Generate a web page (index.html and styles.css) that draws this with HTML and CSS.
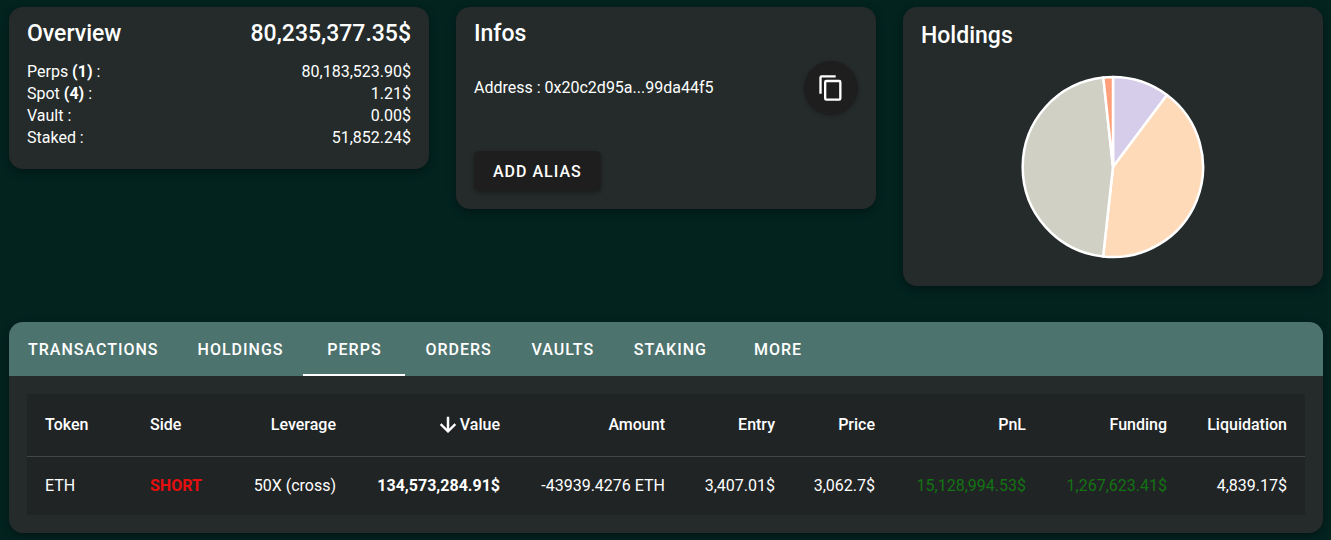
FILE: index.html
```
<!DOCTYPE html>
<html lang="en">
<head>
<meta charset="utf-8">
<meta name="viewport" content="width=device-width, initial-scale=1">
<title>Account overview</title>
<link rel="stylesheet" href="styles.css">
</head>
<body>
<main class="page">
  <div class="cards">
    <section class="card">
      <header class="card-head">
        <h2 class="card-title">Overview</h2>
        <span class="card-title">80,235,377.35$</span>
      </header>
      <dl class="balances">
        <div class="balance"><dt>Perps <b>(1)</b> :</dt><dd>80,183,523.90$</dd></div>
        <div class="balance"><dt>Spot <b>(4)</b> :</dt><dd>1.21$</dd></div>
        <div class="balance"><dt>Vault :</dt><dd>0.00$</dd></div>
        <div class="balance"><dt>Staked :</dt><dd>51,852.24$</dd></div>
      </dl>
    </section>

    <section class="card infos">
      <h2 class="card-title">Infos</h2>
      <div class="address">
        <span>Address : 0x20c2d95a...99da44f5</span>
        <button class="copy" type="button" aria-label="Copy address">
          <svg class="copy-icon" viewBox="0 0 24 24" aria-hidden="true"><path d="M19 21H8V7h11m0-2H8a2 2 0 0 0-2 2v14a2 2 0 0 0 2 2h11a2 2 0 0 0 2-2V7a2 2 0 0 0-2-2m-3-4H4a2 2 0 0 0-2 2v14h2V3h12V1z"/></svg>
        </button>
      </div>
      <button class="alias" type="button">ADD ALIAS</button>
    </section>

    <section class="card holdings">
      <h2 class="card-title">Holdings</h2>
      <svg class="pie" viewBox="-92 -92 184 184" role="img" aria-label="Holdings breakdown">
        <path class="slice slice-lilac" d="M0 0V-90A90 90 0 0 1 54 -72Z"/>
        <path class="slice slice-peach" d="M0 0L54 -72A90 90 0 0 1 -9.9 89.5Z"/>
        <path class="slice slice-stone" d="M0 0L-9.9 89.5A90 90 0 0 1 -9.7 -89.5Z"/>
        <path class="slice slice-coral" d="M0 0L-9.7 -89.5A90 90 0 0 1 0 -90Z"/>
      </svg>
    </section>
  </div>

  <section class="panel">
    <nav class="tabs" role="tablist">
      <button class="tab" type="button" role="tab">TRANSACTIONS</button>
      <button class="tab" type="button" role="tab">HOLDINGS</button>
      <button class="tab tab-active" type="button" role="tab" aria-selected="true">PERPS</button>
      <button class="tab" type="button" role="tab">ORDERS</button>
      <button class="tab" type="button" role="tab">VAULTS</button>
      <button class="tab" type="button" role="tab">STAKING</button>
      <button class="tab" type="button" role="tab">MORE</button>
    </nav>
    <div class="panel-body">
      <table class="perps">
        <colgroup>
          <col class="col-token"><col class="col-side"><col class="col-leverage"><col class="col-value"><col class="col-amount">
          <col class="col-entry"><col class="col-price"><col class="col-pnl"><col class="col-funding"><col class="col-liquidation">
        </colgroup>
        <thead>
          <tr>
            <th class="start">Token</th>
            <th class="start">Side</th>
            <th>Leverage</th>
            <th aria-sort="descending"><span class="sorted"><svg class="sort-icon" viewBox="0 0 24 24" aria-hidden="true"><path d="M11 4h2v12l5.500-5.500 1.420 1.420L12 19.840l-7.920-7.920L5.500 10.500 11 16z"/></svg>Value</span></th>
            <th>Amount</th>
            <th>Entry</th>
            <th>Price</th>
            <th>PnL</th>
            <th>Funding</th>
            <th>Liquidation</th>
          </tr>
        </thead>
        <tbody>
          <tr>
            <td class="start">ETH</td>
            <td class="start short">SHORT</td>
            <td>50X (cross)</td>
            <td class="strong">134,573,284.91$</td>
            <td>-43939.4276 ETH</td>
            <td>3,407.01$</td>
            <td>3,062.7$</td>
            <td class="gain">15,128,994.53$</td>
            <td class="gain">1,267,623.41$</td>
            <td>4,839.17$</td>
          </tr>
        </tbody>
      </table>
    </div>
  </section>
</main>
</body>
</html>
```
FILE: styles.css
```
* {
  box-sizing: border-box;
}

body {
  margin: 0;
  background: #03231f;
  color: #fff;
  font-family: Roboto, "Liberation Sans", sans-serif;
  font-size: 16px;
  line-height: 22px;
}

button {
  border: 0;
  color: inherit;
  font: inherit;
  cursor: pointer;
}

.page {
  display: flex;
  flex-direction: column;
  gap: 36px;
  padding: 7px 8px 7px 9px;
}

.cards {
  display: grid;
  grid-template-columns: repeat(3, 1fr);
  align-items: start;
  gap: 27px;
}

.card {
  padding: 9px 18px 18px;
  border-radius: 14px;
  background: #242b2a;
  box-shadow: 0 3px 8px rgba(0, 0, 0, 0.35);
}

.card-title {
  margin: 0;
  font-size: 23px;
  font-weight: 500;
  line-height: 36px;
}

.card-head {
  display: flex;
  justify-content: space-between;
}

.balances {
  margin: 9px 0 0;
  padding-bottom: 2px;
}

.balance {
  display: flex;
  justify-content: space-between;
}

.balance dd {
  margin: 0;
}

.infos {
  display: flex;
  flex-direction: column;
  align-items: flex-start;
}

.address {
  display: flex;
  align-items: center;
  justify-content: space-between;
  width: 100%;
  margin: 9px 0 36px;
}

.copy {
  display: flex;
  align-items: center;
  justify-content: center;
  width: 54px;
  height: 54px;
  padding: 0;
  border-radius: 50%;
  background: #1e1e1e;
  box-shadow: 0 1px 4px rgba(0, 0, 0, 0.25);
}

.copy-icon {
  width: 28px;
  height: 28px;
  fill: #fff;
}

.alias {
  padding: 10px 19px 8px;
  border-radius: 5px;
  background: #1e1e1e;
  box-shadow: 0 2px 4px rgba(0, 0, 0, 0.3);
  font-weight: 500;
  letter-spacing: 1px;
}

.holdings {
  display: flex;
  flex-direction: column;
  padding: 11px 18px 27px;
}

.pie {
  align-self: center;
  width: 184px;
  margin-top: 21px;
}

.slice {
  stroke: #fff;
  stroke-width: 2.500;
  stroke-linejoin: round;
}

.slice-lilac {
  fill: #d6cdea;
}

.slice-peach {
  fill: #ffdab9;
}

.slice-stone {
  fill: #d0d0c4;
}

.slice-coral {
  fill: #ffa07a;
}

.panel {
  overflow: hidden;
  border-radius: 14px;
  background: #242b2a;
  box-shadow: 0 3px 8px rgba(0, 0, 0, 0.35);
}

.tabs {
  display: flex;
  gap: 1px;
  background: #4d736e;
}

.tab {
  min-width: 102px;
  height: 54px;
  padding: 4px 19px 0;
  border-bottom: 2px solid transparent;
  background: none;
  font-weight: 500;
  letter-spacing: 1px;
}

.tab-active {
  border-bottom-color: #fff;
}

.panel-body {
  padding: 18px;
}

.perps {
  width: 100%;
  table-layout: fixed;
  border-collapse: collapse;
  background: #212425;
}

.perps th,
.perps td {
  padding: 0 18px;
  text-align: right;
  white-space: nowrap;
}

.perps th {
  height: 62px;
  border-bottom: 1px solid #424646;
  font-weight: 500;
}

.perps td {
  height: 59px;
}

.perps .start {
  text-align: left;
}

.perps .short {
  color: #e60e0e;
  font-weight: 700;
}

.perps .strong {
  font-weight: 700;
}

.perps .gain {
  color: #137313;
}

.sorted {
  display: flex;
  align-items: center;
  justify-content: flex-end;
}

.sort-icon {
  width: 24px;
  height: 24px;
  fill: #fff;
  stroke: #fff;
  stroke-width: 0.500;
}

.col-token {
  width: 105px;
}

.col-side {
  width: 102px;
}

.col-leverage {
  width: 120px;
}

.col-value {
  width: 164px;
}

.col-amount {
  width: 165px;
}

.col-entry {
  width: 110px;
}

.col-price {
  width: 100px;
}

.col-pnl {
  width: 151px;
}

.col-funding {
  width: 141px;
}

.col-liquidation {
  width: 120px;
}
```
